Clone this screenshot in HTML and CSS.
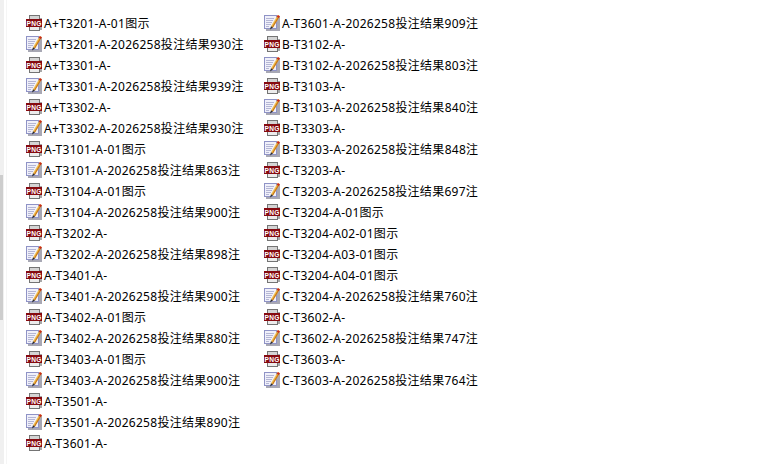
FILE: index.html
```html
<!DOCTYPE html>
<html lang="zh-CN">
<head>
    <meta charset="UTF-8">
    <meta name="viewport" content="width=device-width, initial-scale=1.0">
    <title>文件列表</title>
    <link rel="stylesheet" href="styles.css">
</head>
<body>

    <svg class="defs">
        <symbol id="png" viewBox="0 0 16 16">
            <path d="M3 0h11v16H3z" fill="#747474"/>
            <path d="M4 1h9v3H4z" fill="#d4d4d4"/>
            <path d="M4 12h9v3H4z" fill="#ececec"/>
            <path d="M14 3h2v12h-2z" fill="#a8a8a8"/>
            <path d="M0 4h16v8H0z" fill="#860a10"/>
            <text x="8" y="10.8" textLength="15" lengthAdjust="spacingAndGlyphs" class="png-label">PNG</text>
        </symbol>
        <symbol id="note" viewBox="0 0 16 16">
            <path d="M2 2h14v14H2z" fill="#a8a8b4"/>
            <path d="M0 0h13v14H0z" fill="#8f93c6"/>
            <path d="M1 1h11v12H1z" fill="#f0f0fa"/>
            <path d="M2 3.5h8M2 5.5h7M2 7.5h6M2 9.5h5M2 11.5h3" stroke="#b4b6d4"/>
            <path d="M13.8 0l2 1.2-6.8 11.3-2-1.2z" fill="#f2c04a"/>
            <path d="M14.8 0.6l1 0.6-6.8 11.3-1-0.6z" fill="#c8761e"/>
            <path d="M13.8 0l2 1.2-1 1.8-2-1.2z" fill="#c8281e"/>
            <path d="M7 11.3l2 1.2-3 1.9z" fill="#2a2a2a"/>
        </symbol>
    </svg>

    <div class="window">
        <div class="scrollbar"><div class="thumb"></div></div>
        <div class="divider"></div>

        <div class="files">
            <div class="file"><svg class="icon"><use href="#png"/></svg>A+T3201-A-01图示</div>
            <div class="file"><svg class="icon"><use href="#note"/></svg>A+T3201-A-2026258投注结果930注</div>
            <div class="file"><svg class="icon"><use href="#png"/></svg>A+T3301-A-</div>
            <div class="file"><svg class="icon"><use href="#note"/></svg>A+T3301-A-2026258投注结果939注</div>
            <div class="file"><svg class="icon"><use href="#png"/></svg>A+T3302-A-</div>
            <div class="file"><svg class="icon"><use href="#note"/></svg>A+T3302-A-2026258投注结果930注</div>
            <div class="file"><svg class="icon"><use href="#png"/></svg>A-T3101-A-01图示</div>
            <div class="file"><svg class="icon"><use href="#note"/></svg>A-T3101-A-2026258投注结果863注</div>
            <div class="file"><svg class="icon"><use href="#png"/></svg>A-T3104-A-01图示</div>
            <div class="file"><svg class="icon"><use href="#note"/></svg>A-T3104-A-2026258投注结果900注</div>
            <div class="file"><svg class="icon"><use href="#png"/></svg>A-T3202-A-</div>
            <div class="file"><svg class="icon"><use href="#note"/></svg>A-T3202-A-2026258投注结果898注</div>
            <div class="file"><svg class="icon"><use href="#png"/></svg>A-T3401-A-</div>
            <div class="file"><svg class="icon"><use href="#note"/></svg>A-T3401-A-2026258投注结果900注</div>
            <div class="file"><svg class="icon"><use href="#png"/></svg>A-T3402-A-01图示</div>
            <div class="file"><svg class="icon"><use href="#note"/></svg>A-T3402-A-2026258投注结果880注</div>
            <div class="file"><svg class="icon"><use href="#png"/></svg>A-T3403-A-01图示</div>
            <div class="file"><svg class="icon"><use href="#note"/></svg>A-T3403-A-2026258投注结果900注</div>
            <div class="file"><svg class="icon"><use href="#png"/></svg>A-T3501-A-</div>
            <div class="file"><svg class="icon"><use href="#note"/></svg>A-T3501-A-2026258投注结果890注</div>
            <div class="file"><svg class="icon"><use href="#png"/></svg>A-T3601-A-</div>

            <div class="file"><svg class="icon"><use href="#note"/></svg>A-T3601-A-2026258投注结果909注</div>
            <div class="file"><svg class="icon"><use href="#png"/></svg>B-T3102-A-</div>
            <div class="file"><svg class="icon"><use href="#note"/></svg>B-T3102-A-2026258投注结果803注</div>
            <div class="file"><svg class="icon"><use href="#png"/></svg>B-T3103-A-</div>
            <div class="file"><svg class="icon"><use href="#note"/></svg>B-T3103-A-2026258投注结果840注</div>
            <div class="file"><svg class="icon"><use href="#png"/></svg>B-T3303-A-</div>
            <div class="file"><svg class="icon"><use href="#note"/></svg>B-T3303-A-2026258投注结果848注</div>
            <div class="file"><svg class="icon"><use href="#png"/></svg>C-T3203-A-</div>
            <div class="file"><svg class="icon"><use href="#note"/></svg>C-T3203-A-2026258投注结果697注</div>
            <div class="file"><svg class="icon"><use href="#png"/></svg>C-T3204-A-01图示</div>
            <div class="file"><svg class="icon"><use href="#png"/></svg>C-T3204-A02-01图示</div>
            <div class="file"><svg class="icon"><use href="#png"/></svg>C-T3204-A03-01图示</div>
            <div class="file"><svg class="icon"><use href="#png"/></svg>C-T3204-A04-01图示</div>
            <div class="file"><svg class="icon"><use href="#note"/></svg>C-T3204-A-2026258投注结果760注</div>
            <div class="file"><svg class="icon"><use href="#png"/></svg>C-T3602-A-</div>
            <div class="file"><svg class="icon"><use href="#note"/></svg>C-T3602-A-2026258投注结果747注</div>
            <div class="file"><svg class="icon"><use href="#png"/></svg>C-T3603-A-</div>
            <div class="file"><svg class="icon"><use href="#note"/></svg>C-T3603-A-2026258投注结果764注</div>
        </div>
    </div>

</body>
</html>
```

FILE: styles.css
```css
body {
    margin: 0;
    background-color: white;
    color: black;
    font-family: "Noto Sans", "Noto Sans CJK SC", sans-serif;
    font-size: 12px;
    overflow: hidden;
}

.defs {
    display: none;
}

.png-label {
    fill: white;
    font-family: "Liberation Sans", sans-serif;
    font-size: 7.5px;
    font-weight: bold;
    text-anchor: middle;
}

.window {
    display: flex;
    height: 468px;
}

.scrollbar {
    flex: none;
    width: 4px;
    height: 464px;
    background: #f0f0f0;
}

.thumb {
    width: 3px;
    height: 145px;
    margin-top: 175px;
    background: #cdcdcd;
}

.divider {
    flex: none;
    width: 1px;
    height: 464px;
    margin-left: 2px;
    background: #f5f5f5;
}

.files {
    display: grid;
    grid-auto-flow: column;
    grid-template-rows: repeat(21, 21px);
    grid-auto-columns: 238px;
    padding: 13px 0 0 19px;
}

.file {
    display: flex;
    gap: 2px;
    line-height: 21px;
    letter-spacing: 0.28px;
    white-space: nowrap;
}

.icon {
    flex: none;
    width: 16px;
    height: 16px;
    margin-top: 2px;
}
```
